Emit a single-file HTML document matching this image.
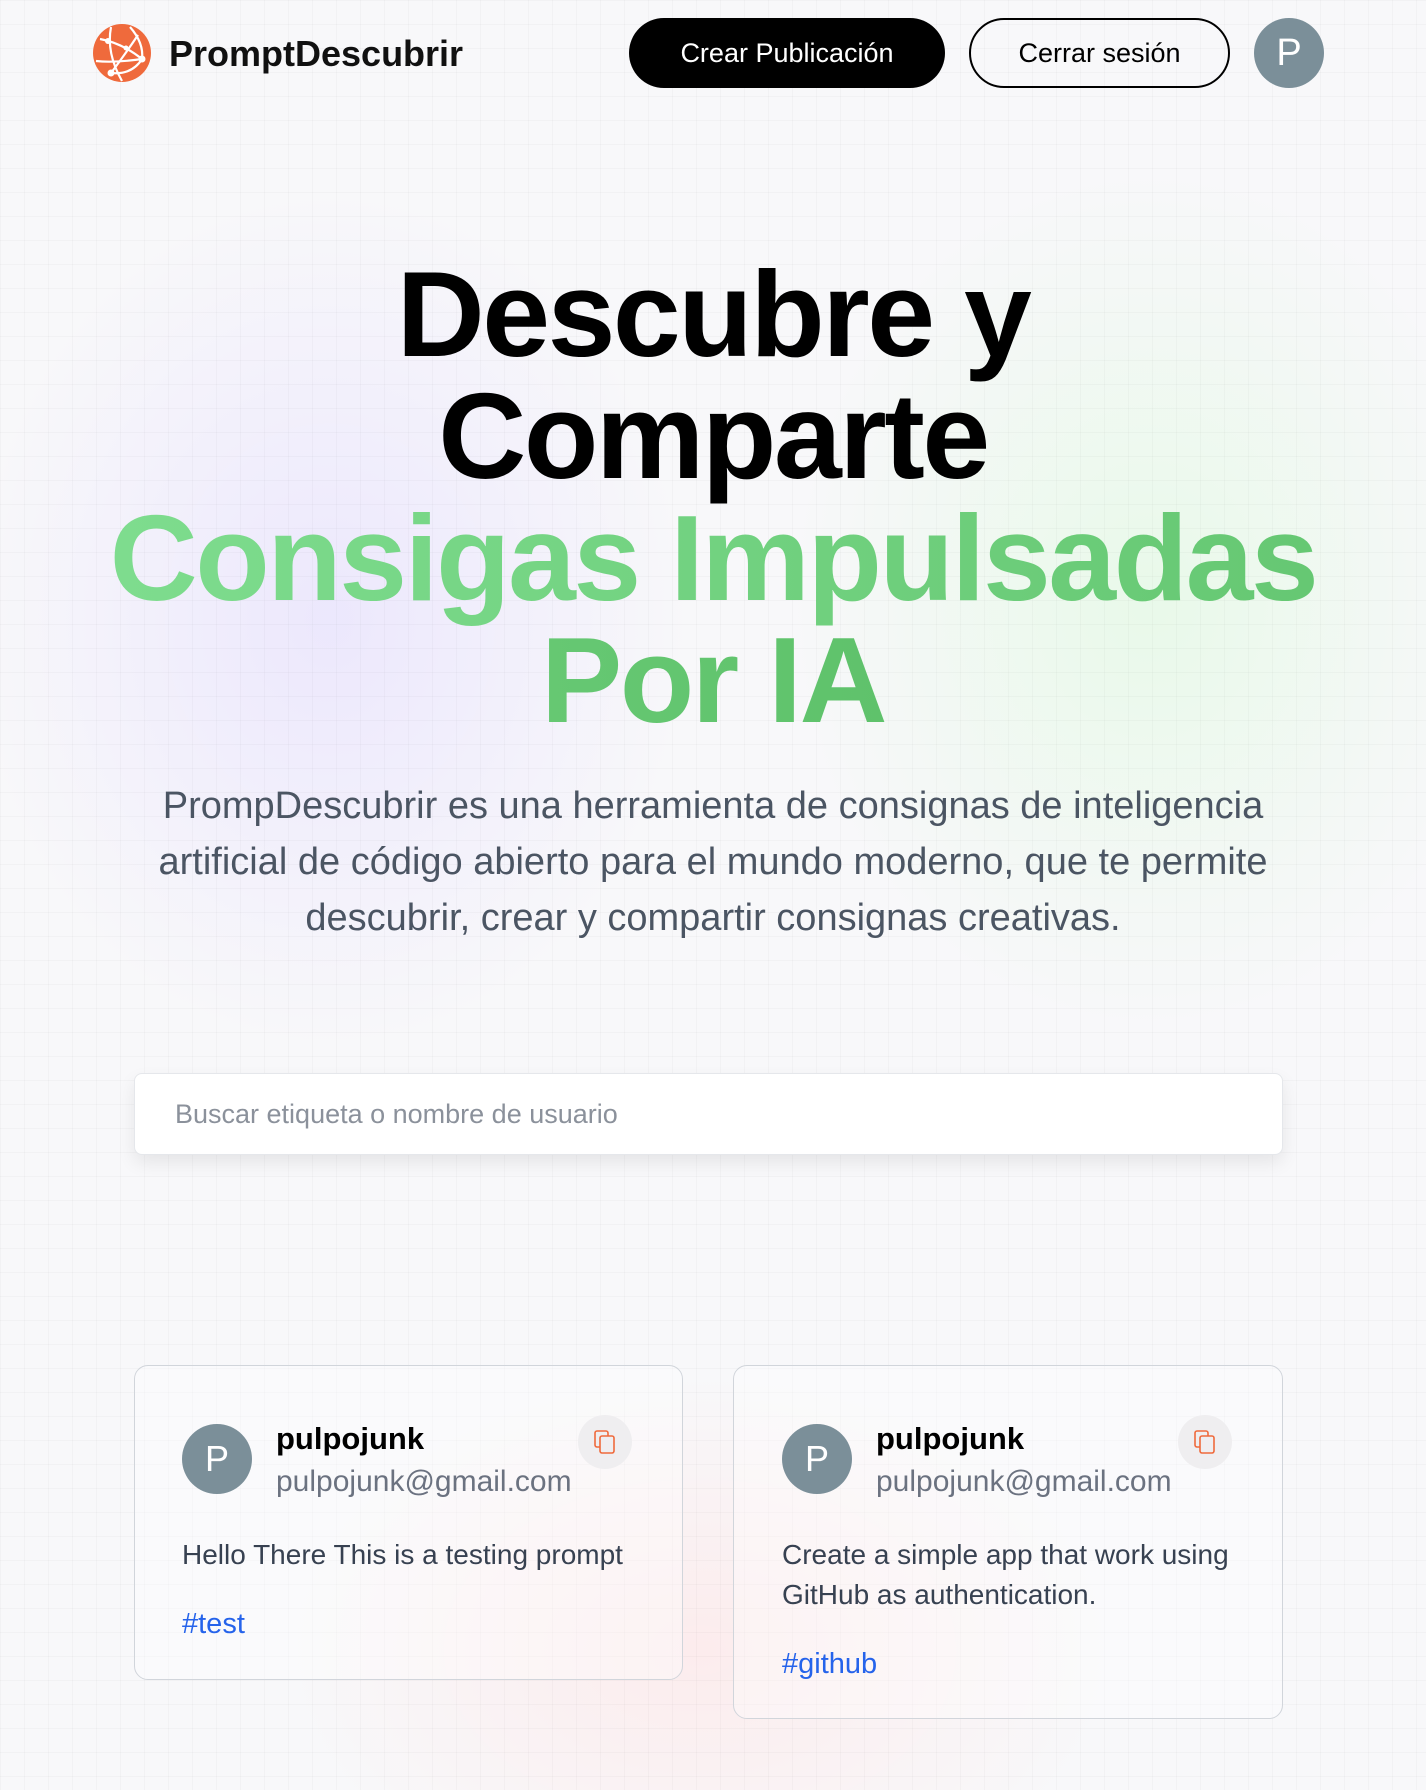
<!DOCTYPE html>
<html><head><meta charset="utf-8">
<style>
*{margin:0;padding:0;box-sizing:border-box}
html,body{width:1426px;height:1790px;overflow:hidden}
body{font-family:"Liberation Sans",Arial,sans-serif;position:relative;
background:
radial-gradient(ellipse 520px 620px at 330px 620px,rgba(226,218,255,.55),transparent 70%),
radial-gradient(ellipse 520px 620px at 1150px 600px,rgba(222,250,222,.6),transparent 70%),
radial-gradient(ellipse 600px 400px at 700px 1650px,rgba(255,226,226,.55),transparent 70%),
#f8f8fa;}
.grid{position:absolute;inset:0;background-image:linear-gradient(rgba(0,0,0,.025) 1px,transparent 1px),linear-gradient(90deg,rgba(0,0,0,.025) 1px,transparent 1px);background-size:24px 24px;}
.abs{position:absolute}
.brand{left:169px;top:33px;font-size:36px;font-weight:bold;color:#111;letter-spacing:0}
.btn{top:18px;height:70px;border-radius:35px;font-size:27px;display:flex;align-items:center;justify-content:center}
.b1{left:629px;width:316px;background:#000;color:#fff}
.b2{left:969px;width:261px;border:2px solid #000;color:#000;background:transparent}
.av{border-radius:50%;background:#7b8f99;color:#fff;display:flex;align-items:center;justify-content:center}
h1{position:absolute;left:0;width:1426px;top:253px;text-align:center;font-size:122px;line-height:122px;font-weight:900;letter-spacing:-2.5px;color:#000}
.g{background:linear-gradient(90deg,#7edc8e,#5fc26b);-webkit-background-clip:text;background-clip:text;color:transparent}
.p{left:128px;width:1170px;top:778px;text-align:center;font-size:38px;line-height:56px;color:#4b5563}
.search{left:134px;top:1073px;width:1149px;height:82px;background:#fff;border:1px solid #e5e7eb;border-radius:8px;box-shadow:0 8px 18px rgba(0,0,0,.08);font-size:27px;color:#8b919b;padding-left:40px;display:flex;align-items:center}
.card{border:1.5px solid #d1d5db;border-radius:14px;background:rgba(255,255,255,.35)}
.un{font-size:31px;font-weight:bold;color:#000}
.em{font-size:30px;color:#6b7280}
.tx{font-size:28px;line-height:40px;color:#374151}
.tag{font-size:29px;color:#2563eb}
.cp{width:54px;height:54px;border-radius:50%;background:#efeef0;display:flex;align-items:center;justify-content:center}
</style></head><body>
<div class="grid"></div>
<svg class="abs" style="left:92px;top:23px" width="60" height="60" viewBox="0 0 60 60">
<circle cx="30" cy="30" r="29" fill="#ef6a3c"/>
<g stroke="#fff" stroke-width="2.2" fill="none">
<path d="M8 16 Q30 20 50 36"/><path d="M19 4 Q14 30 30 58"/><path d="M4 38 Q22 40 50 36"/><path d="M38 4 Q52 20 50 36"/><path d="M19 50 Q34 30 46 12"/><path d="M19 50 Q40 52 50 36"/>
</g>
<g fill="#fff"><circle cx="50" cy="36" r="3.5"/><circle cx="19" cy="50" r="3.5"/><circle cx="16" cy="18" r="3"/><circle cx="34" cy="25" r="2.5"/></g>
</svg>
<div class="abs brand">PromptDescubrir</div>
<div class="abs btn b1">Crear Publicación</div>
<div class="abs btn b2">Cerrar sesión</div>
<div class="abs av" style="left:1254px;top:18px;width:70px;height:70px;font-size:38px">P</div>
<h1>Descubre y<br>Comparte<br><span class="g">Consigas Impulsadas<br>Por IA</span></h1>
<div class="abs p">PrompDescubrir es una herramienta de consignas de inteligencia artificial de código abierto para el mundo moderno, que te permite descubrir, crear y compartir consignas creativas.</div>
<div class="abs search">Buscar etiqueta o nombre de usuario</div>

<div class="abs card" style="left:134px;top:1365px;width:549px;height:315px"></div>
<div class="abs av" style="left:182px;top:1424px;width:70px;height:70px;font-size:36px">P</div>
<div class="abs un" style="left:276px;top:1421px">pulpojunk</div>
<div class="abs em" style="left:276px;top:1465px">pulpojunk@gmail.com</div>
<div class="abs cp" style="left:578px;top:1415px"><svg width="24" height="26" viewBox="0 0 24 26" fill="none" stroke="#ef6a3c" stroke-width="1.6"><rect x="2" y="2" width="13" height="16" rx="2"/><rect x="7" y="7" width="14" height="17" rx="2" fill="#efeef0"/></svg></div>
<div class="abs tx" style="left:182px;top:1535px">Hello There This is a testing prompt</div>
<div class="abs tag" style="left:182px;top:1608px">#test</div>

<div class="abs card" style="left:733px;top:1365px;width:550px;height:354px"></div>
<div class="abs av" style="left:782px;top:1424px;width:70px;height:70px;font-size:36px">P</div>
<div class="abs un" style="left:876px;top:1421px">pulpojunk</div>
<div class="abs em" style="left:876px;top:1465px">pulpojunk@gmail.com</div>
<div class="abs cp" style="left:1178px;top:1415px"><svg width="24" height="26" viewBox="0 0 24 26" fill="none" stroke="#ef6a3c" stroke-width="1.6"><rect x="2" y="2" width="13" height="16" rx="2"/><rect x="7" y="7" width="14" height="17" rx="2" fill="#efeef0"/></svg></div>
<div class="abs tx" style="left:782px;top:1535px;width:480px">Create a simple app that work using GitHub as authentication.</div>
<div class="abs tag" style="left:782px;top:1648px">#github</div>
</body></html>
